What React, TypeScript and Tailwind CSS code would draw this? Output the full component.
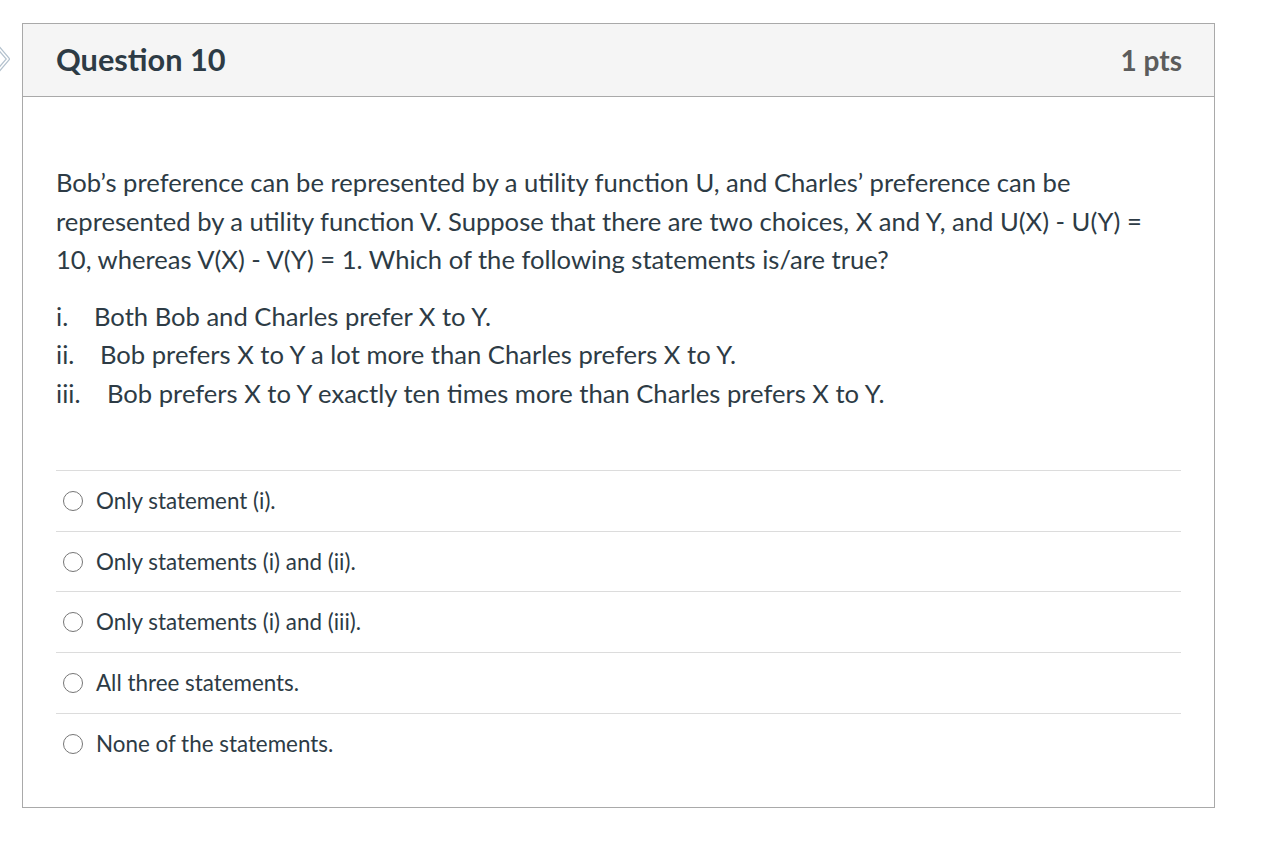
import React from 'react';

const ANSWERS = [
  'Only statement (i).',
  'Only statements (i) and (ii).',
  'Only statements (i) and (iii).',
  'All three statements.',
  'None of the statements.',
];

const STATEMENTS = [
  { marker: 'i.', gap: 'pl-[38px]', text: 'Both Bob and Charles prefer X to Y.' },
  { marker: 'ii.', gap: 'pl-[44px]', text: 'Bob prefers X to Y a lot more than Charles prefers X to Y.' },
  { marker: 'iii.', gap: 'pl-[51px]', text: 'Bob prefers X to Y exactly ten times more than Charles prefers X to Y.' },
];

export default function App() {
  return (
    <div className="relative min-h-screen bg-white pt-[23px] pl-[22px] font-['Lato','Noto_Sans',sans-serif] text-[#2d3b45]">
      {/* side nav chevron */}
      <svg className="absolute left-[-6px] top-[44px]" width="16" height="30" viewBox="0 0 16 30">
        <path d="M2 1 L14 15 L2 29" fill="none" stroke="#b4c2ce" strokeWidth="4" strokeLinejoin="round" />
        <path d="M2 1 L14 15 L2 29" fill="none" stroke="#ffffff" strokeWidth="1.5" strokeLinejoin="round" />
      </svg>

      <div className="w-[1193px] h-[785px] border border-[#a9a9a9] bg-white">
        {/* header */}
        <div className="h-[73px] bg-[#f5f5f5] border-b border-[#a9a9a9] flex items-center justify-between pl-[33px] pr-[32px]">
          <h2 className="text-[30.7px] font-bold leading-none text-[#2d3b45]">Question 10</h2>
          <span className="text-[28px] font-bold leading-none text-[#5c5c5c]">1 pts</span>
        </div>

        {/* body */}
        <div className="px-[33px] pt-[66px]">
          <p className="text-[25.6px] leading-[38.5px] whitespace-nowrap">
            Bob’s preference can be represented by a utility function U, and Charles’ preference can be
            <br />
            represented by a utility function V. Suppose that there are two choices, X and Y, and U(X) - U(Y) =
            <br />
            10, whereas V(X) - V(Y) = 1. Which of the following statements is/are true?
          </p>

          <div className="mt-[18px] text-[25.6px] leading-[38.5px]">
            {STATEMENTS.map((s) => (
              <div key={s.marker} className="relative whitespace-nowrap">
                <span className="absolute left-0 top-0">{s.marker}</span>
                <span className={`block ${s.gap}`}>{s.text}</span>
              </div>
            ))}
          </div>

          <div className="mt-[58px]">
            {ANSWERS.map((a) => (
              <label key={a} className="flex items-center h-[60.7px] border-t border-[#dcdcdc] text-[22.4px] cursor-pointer">
                <span className="ml-[7px] w-[20px] h-[20px] rounded-full border-[1.5px] border-[#767676] bg-white" />
                <span className="ml-[13px]">{a}</span>
              </label>
            ))}
          </div>
        </div>
      </div>
    </div>
  );
}
